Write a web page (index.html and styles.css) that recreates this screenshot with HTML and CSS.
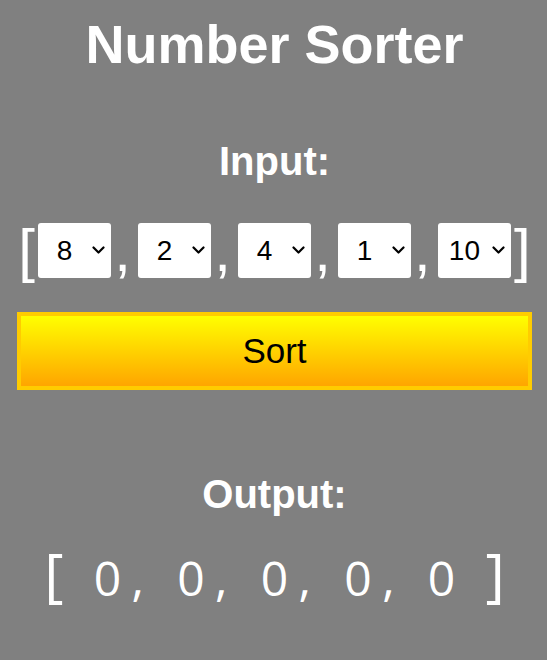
FILE: index.html
```html
<!DOCTYPE html>
<html lang="en">
<head>
<meta charset="utf-8">
<title>Number Sorter</title>
<link rel="stylesheet" href="styles.css">
</head>
<body>
<main class="page">
  <h1 class="title">Number Sorter</h1>
  <form class="sorter">
    <h2 class="legend">Input:</h2>
    <div class="input-row">
      <span class="bracket open">[</span>
      <span class="select-wrap">
        <select class="value-select" aria-label="number 1">
          <option>1</option><option>2</option><option>4</option><option selected>8</option><option>10</option>
        </select>
        <svg class="chevron" viewBox="0 0 13 8" width="13" height="8" aria-hidden="true"><path d="M1.5 1.5 L6.5 6.5 L11.5 1.5" fill="none" stroke="#000" stroke-width="2.2" stroke-linecap="round" stroke-linejoin="round"/></svg>
      </span>
      <span class="comma">,</span>
      <span class="select-wrap">
        <select class="value-select" aria-label="number 2">
          <option>1</option><option selected>2</option><option>4</option><option>8</option><option>10</option>
        </select>
        <svg class="chevron" viewBox="0 0 13 8" width="13" height="8" aria-hidden="true"><path d="M1.5 1.5 L6.5 6.5 L11.5 1.5" fill="none" stroke="#000" stroke-width="2.2" stroke-linecap="round" stroke-linejoin="round"/></svg>
      </span>
      <span class="comma">,</span>
      <span class="select-wrap">
        <select class="value-select" aria-label="number 3">
          <option>1</option><option>2</option><option selected>4</option><option>8</option><option>10</option>
        </select>
        <svg class="chevron" viewBox="0 0 13 8" width="13" height="8" aria-hidden="true"><path d="M1.5 1.5 L6.5 6.5 L11.5 1.5" fill="none" stroke="#000" stroke-width="2.2" stroke-linecap="round" stroke-linejoin="round"/></svg>
      </span>
      <span class="comma">,</span>
      <span class="select-wrap">
        <select class="value-select" aria-label="number 4">
          <option selected>1</option><option>2</option><option>4</option><option>8</option><option>10</option>
        </select>
        <svg class="chevron" viewBox="0 0 13 8" width="13" height="8" aria-hidden="true"><path d="M1.5 1.5 L6.5 6.5 L11.5 1.5" fill="none" stroke="#000" stroke-width="2.2" stroke-linecap="round" stroke-linejoin="round"/></svg>
      </span>
      <span class="comma">,</span>
      <span class="select-wrap">
        <select class="value-select" aria-label="number 5">
          <option>1</option><option>2</option><option>4</option><option>8</option><option selected>10</option>
        </select>
        <svg class="chevron" viewBox="0 0 13 8" width="13" height="8" aria-hidden="true"><path d="M1.5 1.5 L6.5 6.5 L11.5 1.5" fill="none" stroke="#000" stroke-width="2.2" stroke-linecap="round" stroke-linejoin="round"/></svg>
      </span>
      <span class="bracket close">]</span>
    </div>
    <button type="button" class="sort-button">Sort</button>
  </form>
  <section class="output">
    <h2 class="legend output-title">Output:</h2>
    <p class="output-values"><span class="output-text"><span class="out-bracket open-b">[</span> 0, 0, 0, 0, 0 <span class="out-bracket close-b">]</span></span></p>
  </section>
</main>
</body>
</html>
```

FILE: styles.css
```css
* {
  box-sizing: border-box;
}

body {
  margin: 0;
  background-color: #808080;
  color: #ffffff;
  font-family: "Liberation Sans", Arial, sans-serif;
}

.page {
  padding: 0 15px 0 17px;
}

.title {
  margin: 12px 0 0;
  font-size: 54px;
  line-height: 64px;
  font-weight: bold;
  text-align: center;
}

.sorter {
  margin: 0;
}

.legend {
  margin: 61px 0 0;
  font-size: 40px;
  line-height: 48px;
  font-weight: bold;
  text-align: center;
}

.input-row {
  display: flex;
  align-items: center;
  justify-content: center;
  margin-top: 38px;
  height: 55px;
}

.bracket,
.comma {
  font-size: 60px;
  line-height: 55px;
  color: #ffffff;
}

.bracket.open {
  margin-right: 3px;
}

.bracket.close {
  margin-left: 3px;
}

.comma {
  margin: 0 7px 0 3px;
}

.select-wrap {
  position: relative;
  display: block;
  width: 73.3px;
  height: 55px;
}

.value-select {
  appearance: none;
  -webkit-appearance: none;
  width: 100%;
  height: 100%;
  margin: 0;
  border: none;
  border-radius: 3px;
  background-color: #ffffff;
  color: #000000;
  font-family: "Liberation Sans", Arial, sans-serif;
  font-size: 28px;
  padding: 0 26px 0 6px;
  text-align: center;
  text-align-last: center;
}

.chevron {
  position: absolute;
  right: 6px;
  top: 23px;
  pointer-events: none;
}

.sort-button {
  display: block;
  width: 100%;
  height: 78px;
  margin-top: 34px;
  border: 4px solid #ffcc00;
  background: linear-gradient(#ffff00, #ffa500);
  color: #000000;
  font-family: "Liberation Sans", Arial, sans-serif;
  font-size: 35px;
  cursor: pointer;
}

.output-title {
  margin-top: 80px;
}

.output-values {
  margin: 30px 0 0;
  font-family: "Open Sans", sans-serif;
  font-size: 48px;
  line-height: 60px;
  text-align: center;
}

.output-text {
  letter-spacing: 10.4px;
  margin-right: -10.4px;
}

.out-bracket {
  font-size: 59px;
  font-weight: 500;
  line-height: 40px;
}

.out-bracket.open-b {
  margin-right: -3px;
}

.out-bracket.close-b {
  margin-left: -3px;
}
```
